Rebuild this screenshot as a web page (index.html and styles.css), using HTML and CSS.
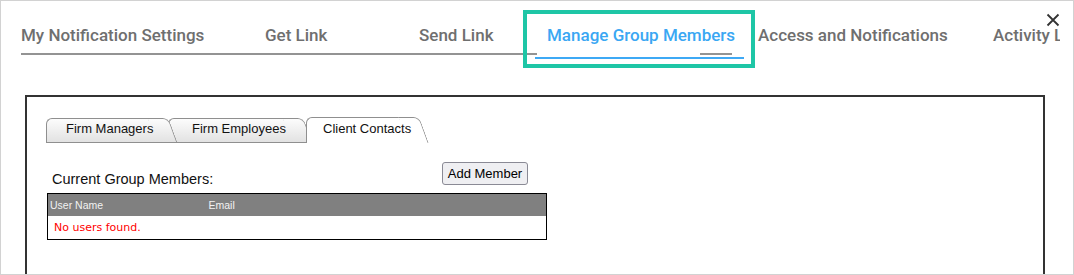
FILE: index.html
```html
<!DOCTYPE html>
<html lang="en">
<head>
<meta charset="utf-8">
<title>Manage Group Members</title>
<link rel="stylesheet" href="styles.css">
</head>
<body>
<div class="frame">
  <nav class="nav">
    <a class="tab tab-settings">My Notification Settings</a>
    <a class="tab tab-getlink">Get Link</a>
    <a class="tab tab-sendlink">Send Link</a>
    <a class="tab tab-manage active">Manage Group Members</a>
    <a class="tab tab-access">Access and Notifications</a>
    <a class="tab tab-activity">Activity Log</a>
  </nav>
  <button class="close" aria-label="Close">
    <svg width="14" height="14" viewBox="0 0 14 14"><path d="M1.5 1.5L12.5 12.5M12.5 1.5L1.5 12.5" stroke="#333" stroke-width="1.8" fill="none"/></svg>
  </button>
  <section class="panel">
    <div class="itabs">
      <span class="itab itab-managers">Firm Managers</span>
      <span class="itab itab-employees">Firm Employees</span>
      <span class="itab itab-contacts itab-active">Client Contacts</span>
    </div>
    <div class="members-head">
      <span class="members-title">Current Group Members:</span>
      <button class="add-btn">Add Member</button>
    </div>
    <table class="members">
      <thead>
        <tr><th class="col-user">User Name</th><th>Email</th></tr>
      </thead>
      <tbody>
        <tr><td colspan="2" class="empty">No users found.</td></tr>
      </tbody>
    </table>
  </section>
</div>
</body>
</html>
```
FILE: styles.css
```css
* { box-sizing: border-box; }
html, body { margin: 0; padding: 0; background: #fff; }

.frame {
  position: relative;
  width: 1074px;
  height: 275px;
  border: 1px solid #d2d2d2;
  overflow: hidden;
  background: #fff;
}

/* top navigation */
.nav {
  display: flex;
  width: 1059px;
  padding: 24px 0 11px 20px;
  overflow: hidden;
  background-image: linear-gradient(to right, #939393 0 516px, transparent 516px 679px, #939393 679px 711px);
  background-size: 711px 2px;
  background-repeat: no-repeat;
  background-position: 20px 52px;
  font-family: Roboto, "Liberation Sans", sans-serif;
  font-weight: 500;
  font-size: 17px;
  color: #6f6f6f;
}
.tab {
  flex: none;
  display: block;
  line-height: 20px;
  padding-bottom: 12px;
  border-bottom: 2px solid transparent;
  white-space: nowrap;
  text-decoration: none;
  color: inherit;
}
.tab-settings { width: 244px; }
.tab-getlink { width: 154px; }
.tab-sendlink { width: 116px; }
.tab.active {
  position: relative;
  width: 209px;
  padding-left: 12px;
  color: #3aa7f3;
  border-bottom-color: #3ea9f5;
}
.tab.active::after {
  content: "";
  position: absolute;
  left: -12px;
  right: -11px;
  top: -15px;
  bottom: -11px;
  border: 4px solid #1ec6a6;
}
.tab-access { margin-left: 14px; width: 235px; }

.close {
  position: absolute;
  top: 12px;
  right: 13px;
  width: 14px;
  height: 14px;
  padding: 0;
  border: 0;
  background: none;
  display: block;
}
.close svg { display: block; }

/* content panel */
.panel {
  margin: 25px 0 0 24px;
  width: 1020px;
  min-height: 200px;
  border: 2px solid #333;
  padding: 20px 0 0 19px;
}

.itabs {
  display: flex;
  align-items: flex-end;
  height: 26px;
  font-family: "Liberation Sans", Arial, sans-serif;
  font-size: 13px;
  color: #111;
}
.itab {
  position: relative;
  z-index: 2;
  height: 25px;
  line-height: 20px;
  border: 1px solid #8f8f8f;
  border-right: 0;
  border-radius: 6px 0 0 0;
  background: linear-gradient(#fcfcfc, #e2e2e2);
  white-space: nowrap;
}
.itab::after {
  content: "";
  position: absolute;
  z-index: -1;
  top: -1px;
  bottom: -1px;
  right: -12px;
  width: 20px;
  border: 1px solid #8f8f8f;
  border-left: 0;
  border-radius: 0 6px 0 0;
  background: linear-gradient(#fcfcfc, #e2e2e2);
  transform: skewX(20deg);
}
.itab-managers { z-index: 3; width: 115px; padding-left: 19px; }
.itab-employees { z-index: 2; width: 128px; margin-left: 7px; padding-left: 23px; }
.itab-contacts { width: 106px; margin-left: 10px; padding-left: 16px; }
.itab-active {
  z-index: 4;
  height: 26px;
  padding-top: 1px;
  border-bottom: 0;
  background: #fff;
}
.itab-active::after {
  bottom: 0;
  border-bottom: 0;
  background: #fff;
}

.members-head {
  display: flex;
  justify-content: space-between;
  align-items: flex-start;
  width: 482px;
  margin-top: 19px;
  padding-left: 6px;
}
.members-title {
  margin-top: 9px;
  font-family: "Liberation Sans", Arial, sans-serif;
  font-size: 14.5px;
  line-height: 17px;
  color: #111;
}
.add-btn {
  width: 86px;
  height: 23px;
  padding: 0;
  border: 1px solid #8a8a95;
  border-radius: 3px;
  background: #efeff2;
  color: #000;
  font-family: "Liberation Sans", Arial, sans-serif;
  font-size: 13px;
}

.members {
  margin: 5px 0 0 1px;
  width: 500px;
  border-collapse: collapse;
  border: 1px solid #000;
}
.members th {
  height: 22px;
  padding: 0 2px;
  background: #808080;
  color: #f2f2f2;
  font-family: "Liberation Sans", Arial, sans-serif;
  font-size: 10.5px;
  font-weight: normal;
  text-align: left;
}
.members th.col-user { width: 159px; }
.members td.empty {
  height: 24px;
  padding: 0 6px;
  color: #f00;
  font-family: "DejaVu Sans", Verdana, sans-serif;
  font-size: 11px;
}
```
